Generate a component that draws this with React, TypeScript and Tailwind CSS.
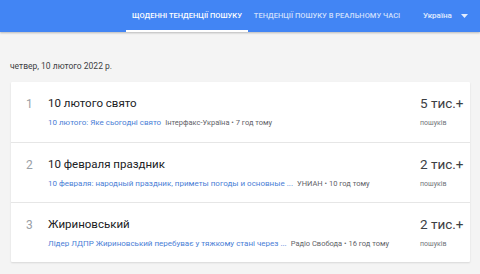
const items = [
  {
    n: 1,
    title: '10 лютого свято',
    link: '10 лютого: Яке сьогодні свято',
    source: 'Інтерфакс-Україна • 7 год тому',
    count: '5 тис.+',
  },
  {
    n: 2,
    title: '10 февраля праздник',
    link: '10 февраля: народный праздник, приметы погоды и основные ...',
    source: 'УНИАН • 10 год тому',
    count: '2 тис.+',
  },
  {
    n: 3,
    title: 'Жириновський',
    link: 'Лідер ЛДПР Жириновський перебуває у тяжкому стані через ...',
    source: 'Радіо Свобода • 16 год тому',
    count: '2 тис.+',
  },
];

export default function App() {
  return (
    <div
      className="w-[480px] h-[274px] overflow-hidden bg-[#f4f4f4]"
      style={{ fontFamily: 'Roboto, "Noto Sans", sans-serif' }}
    >
      {/* верхня панель */}
      <div className="h-[32px] bg-[#4285f4] flex items-end shadow-[0_1px_2px_rgba(0,0,0,0.25)] relative z-10">
        <div className="flex h-full ml-[126px]">
          <div className="w-[122px] h-full flex items-center justify-center text-[7.5px] font-medium text-white border-b-[2px] border-white pt-[1px]">
            ЩОДЕННІ ТЕНДЕНЦІЇ ПОШУКУ
          </div>
          <div className="w-[158px] h-full flex items-center justify-center text-[7.5px] font-medium text-white/75 pb-[1px]">
            ТЕНДЕНЦІЇ ПОШУКУ В РЕАЛЬНОМУ ЧАСІ
          </div>
        </div>
        <div className="h-full flex items-center ml-[17px] text-[8px] font-medium text-white/85 pb-[1px]">
          Україна
          <svg width="7" height="4" viewBox="0 0 7 4" className="ml-[9px] fill-white/85">
            <path d="M0 0h7L3.5 4z" />
          </svg>
        </div>
      </div>

      <div className="px-[11px] pt-[29px]">
        <div className="text-[8.5px] text-[#3c4043] mb-[10px] leading-[11px] ml-[-1px]">четвер, 10 лютого 2022 р.</div>

        <div className="bg-white shadow-[0_1px_2px_rgba(0,0,0,0.12)] rounded-[1px] w-[459px]">
          {items.map((it, i) => (
            <div
              key={it.n}
              className={`h-[60px] flex items-start ${i > 0 ? 'border-t border-[#e6e6e6]' : ''}`}
            >
              <div className="w-[37px] pl-[15px] pt-[14px] text-[12px] text-[#9aa0a6] leading-[16px]">{it.n}</div>
              <div className="flex-1 min-w-0 pt-[14px]">
                <div className="text-[11.5px] text-[#202124] leading-[15px]">{it.title}</div>
                <div className="mt-[7px] text-[8px] leading-[10px] whitespace-nowrap">
                  <span className="text-[#4a7ed6]">{it.link}</span>
                  <span className="text-[#5f6368] ml-[4px] text-[7.5px]">{it.source}</span>
                </div>
              </div>
              <div className="w-[50px] pt-[12px]">
                <div className="text-[13.5px] text-[#3c4043] leading-[18px]">{it.count}</div>
                <div className="mt-[7px] text-[7px] text-[#70757a] leading-[9px]">пошуків</div>
              </div>
            </div>
          ))}
        </div>
      </div>
    </div>
  );
}
